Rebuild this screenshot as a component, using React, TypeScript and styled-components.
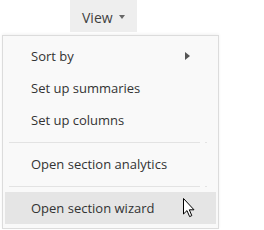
import React from "react";
import styled, { createGlobalStyle } from "styled-components";

const Global = createGlobalStyle`
  html, body { margin: 0; padding: 0; background: #ffffff; }
  body { font-family: "Open Sans", "Noto Sans", sans-serif; }
`;

const Page = styled.div`
  width: 264px;
  height: 230px;
  position: relative;
  overflow: hidden;
`;

const Bar = styled.div`
  display: flex;
  padding-left: 70px;
  height: 32px;
`;

const ViewButton = styled.div`
  display: flex;
  align-items: center;
  gap: 6px;
  width: 67px;
  box-sizing: border-box;
  padding: 3px 0 0 12px;
  background: #eeeeee;
  color: #3f3f3f;
  font-size: 14px;
`;

const Caret = styled.span`
  width: 0;
  height: 0;
  border-left: 3.5px solid transparent;
  border-right: 3.5px solid transparent;
  border-top: 4px solid #666666;
  margin-top: -2px;
`;

const Menu = styled.div`
  position: absolute;
  left: 2px;
  top: 35px;
  width: 217px;
  box-sizing: border-box;
  background: #f9f9f9;
  border: 1px solid #dcdcdc;
  box-shadow: 0 -1px 3px rgba(0, 0, 0, 0.06);
  padding: 4px 2px 4px 2px;
  display: flex;
  flex-direction: column;
`;

const Item = styled.div<{ $active?: boolean }>`
  height: 32px;
  display: flex;
  align-items: center;
  padding-left: 26px;
  position: relative;
  font-size: 13px;
  color: #333333;
  background: ${(p) => (p.$active ? "#e5e5e5" : "transparent")};
`;

const SubArrow = styled.span`
  position: absolute;
  left: 180px;
  top: 12px;
  width: 0;
  height: 0;
  border-top: 4.5px solid transparent;
  border-bottom: 4.5px solid transparent;
  border-left: 5px solid #555555;
`;

const Separator = styled.div`
  height: 1px;
  margin: 6px 9px 5px 4px;
  background: linear-gradient(
    to right,
    #e3e3e3 0,
    #e3e3e3 191px,
    transparent 191px,
    transparent 196px,
    #e3e3e3 196px
  );
`;

const Cursor = styled.svg`
  position: absolute;
  left: 183px;
  top: 198px;
`;

export default function App() {
  return (
    <Page>
      <Global />
      <Bar>
        <ViewButton>
          View
          <Caret />
        </ViewButton>
      </Bar>
      <Menu>
        <Item>
          Sort by
          <SubArrow />
        </Item>
        <Item>Set up summaries</Item>
        <Item>Set up columns</Item>
        <Separator />
        <Item>Open section analytics</Item>
        <Separator />
        <Item $active>Open section wizard</Item>
      </Menu>
      <Cursor width="13" height="20" viewBox="0 0 13 20">
        <path
          d="M0.5 0.5 L0.5 16 L4 12.6 L6.6 18.6 L8.8 17.6 L6.3 11.8 L11 11.8 Z"
          fill="#ffffff"
          stroke="#000000"
          strokeWidth="1"
          strokeLinejoin="miter"
        />
      </Cursor>
    </Page>
  );
}
